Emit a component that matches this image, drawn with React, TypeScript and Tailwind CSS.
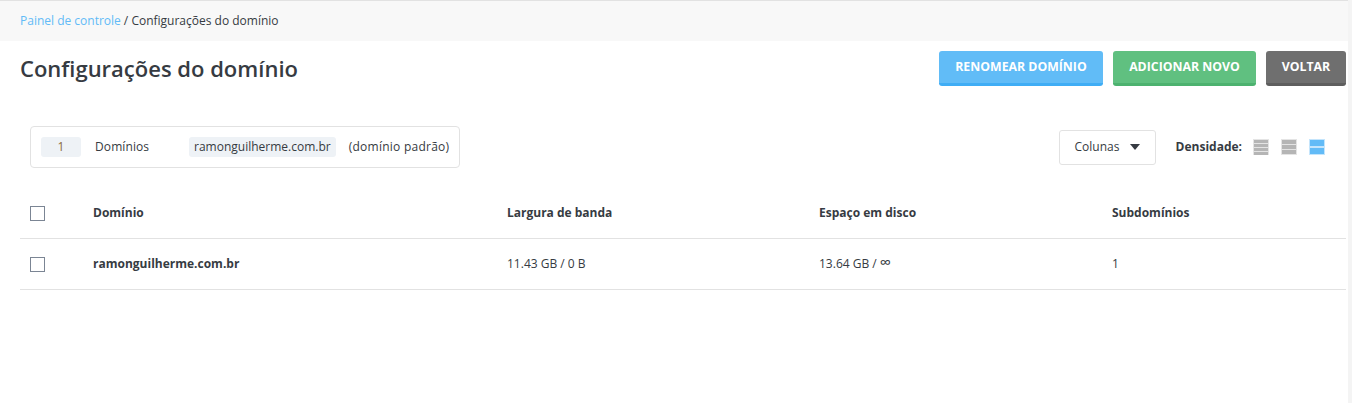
const font = "font-['Open_Sans',sans-serif]";

const densityBars: Record<number, { ys: number[]; h: number }> = {
  4: { ys: [1, 5, 9, 13], h: 3 },
  3: { ys: [1, 6, 11], h: 4 },
  2: { ys: [1, 9], h: 6 },
};

function DensityIcon({ rows, active }: { rows: number; active?: boolean }) {
  const { ys, h } = densityBars[rows];
  return (
    <svg width="16" height="16" viewBox="0 0 16 16" className="block">
      <rect x="0" y="0" width="16" height="16" fill={active ? "#c4e5fc" : "#e4e4e4"} />
      {ys.map((y) => (
        <rect key={y} x="1" y={y} width="14" height={h} fill={active ? "#62bbf7" : "#b5b5b5"} />
      ))}
    </svg>
  );
}

function Checkbox() {
  return <div className="w-[15px] h-[15px] border border-[#7b8594] bg-white" />;
}

const rowGrid = "grid grid-cols-[63px_414px_312px_293px_1fr] items-center";

export default function App() {
  return (
    <div className={`${font} h-[403px] w-full bg-white overflow-hidden flex text-[#363b42]`}>
      <div className="w-[1348px] shrink-0">
        <div className="h-[41px] bg-[#f8f8f8] border-t border-[#e2e2e2] pl-5 flex items-center text-xs">
          <span className="text-[#62bbf7]">Painel de controle</span>
          <span className="ml-[3px]">/ Configurações do domínio</span>
        </div>

        <div className="flex items-start justify-between pl-5 pr-0.5 pt-2.5">
          <h1 className="text-[22px] leading-[34px] font-semibold">Configurações do domínio</h1>
          <div className="flex gap-2.5 text-white text-[12.3px] font-bold">
            <button className="h-[35px] w-[164px] rounded-[3px] bg-[#61bcf7] border-b-[3px] border-[#3fadf5]">
              RENOMEAR DOMÍNIO
            </button>
            <button className="h-[35px] w-[143px] rounded-[3px] bg-[#60c080] border-b-[3px] border-[#4db26f]">
              ADICIONAR NOVO
            </button>
            <button className="h-[35px] w-20 rounded-[3px] bg-[#6f6f6f] border-b-[3px] border-[#5e5e5e]">
              VOLTAR
            </button>
          </div>
        </div>

        <div className="flex items-center justify-between mt-10 ml-[30px] pr-[23px]">
          <div className="h-[42px] w-[430px] border border-[#e2e2e2] rounded-[4px] flex items-center pl-2.5 text-xs">
            <span className="w-10 h-5 rounded-[3px] bg-[#eef2f6] flex items-center justify-center text-[#8a6a3c]">
              1
            </span>
            <span className="ml-3.5 w-[94px] tracking-[0.1px]">Domínios</span>
            <span className="h-5 px-[5px] rounded-[3px] bg-[#eef2f6] flex items-center">ramonguilherme.com.br</span>
            <span className="ml-[13px] tracking-[0.25px]">(domínio padrão)</span>
          </div>

          <div className="flex items-center">
            <button className="h-[35px] w-[97px] border border-[#e2e2e2] rounded-[3px] flex items-center pl-[15px] text-xs">
              Colunas
              <span className="ml-[11px] w-0 h-0 border-x-[5.5px] border-x-transparent border-t-[6px] border-t-[#363b42]" />
            </button>
            <span className="ml-5 text-xs font-bold">Densidade:</span>
            <div className="ml-[11px] flex gap-3">
              <DensityIcon rows={4} />
              <DensityIcon rows={3} />
              <DensityIcon rows={2} active />
            </div>
          </div>
        </div>

        <div className="ml-5 mt-5 mr-0.5 text-xs">
          <div className={`${rowGrid} h-[51px] pl-2.5 border-b border-[#e2e2e2] font-bold`}>
            <Checkbox />
            <span>Domínio</span>
            <span>Largura de banda</span>
            <span>Espaço em disco</span>
            <span>Subdomínios</span>
          </div>
          <div className={`${rowGrid} h-[51px] pl-2.5 border-b border-[#e2e2e2]`}>
            <Checkbox />
            <span className="font-bold">ramonguilherme.com.br</span>
            <span>11.43 GB / 0 B</span>
            <span>
              13.64 GB / <span className="text-base leading-[0]">∞</span>
            </span>
            <span>1</span>
          </div>
        </div>
      </div>
      <div className="flex-1 bg-[#f4f4f4]" />
    </div>
  );
}
